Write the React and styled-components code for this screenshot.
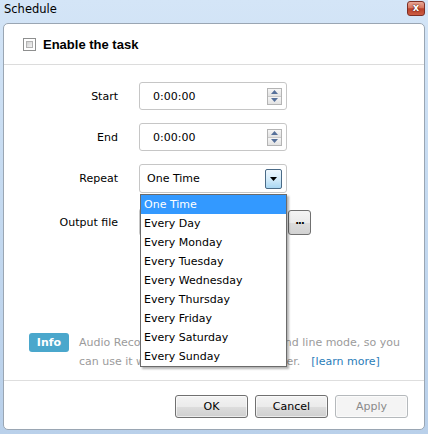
import React from 'react';
import styled, { createGlobalStyle } from 'styled-components';

const GlobalStyle = createGlobalStyle`
  html, body { margin: 0; padding: 0; }
  body {
    font-family: "DejaVu Sans", Verdana, sans-serif;
    font-size: 11px;
    color: #000;
  }
`;

const Window = styled.div`
  width: 428px;
  height: 434px;
  box-sizing: border-box;
  padding: 0 3px 4px 3px;
  background: linear-gradient(180deg, #d4e5f7 0%, #c6dbf1 40%, #b9d0ea 100%);
  display: flex;
  flex-direction: column;
`;

const TitleBar = styled.div`
  height: 23px;
  flex: none;
  display: flex;
  justify-content: space-between;
  align-items: flex-start;
`;

const Title = styled.div`
  padding: 2px 0 0 1px;
  line-height: 14px;
  font-size: 11.5px;
`;

const CloseButton = styled.div`
  margin: 1px 0 0 0;
  width: 18px;
  height: 15px;
  box-sizing: border-box;
  border: 1px solid #7d2f25;
  border-radius: 3px;
  background: linear-gradient(180deg, #e9a897 0%, #d6765f 45%, #b9412a 52%, #cc5d43 100%);
  color: #fff;
  font: bold 10px/12px "DejaVu Sans", sans-serif;
  text-align: center;
  text-shadow: 0 0 2px #5a1a10, 0 0 1px #5a1a10;
`;

const Panel = styled.div`
  flex: 1;
  background: #fff;
  border: 1px solid #9aa6b3;
  border-radius: 5px;
  display: flex;
  flex-direction: column;
  position: relative;
`;

const Header = styled.div`
  height: 41px;
  box-sizing: border-box;
  border-bottom: 1px solid #dcdcdc;
  display: flex;
  align-items: center;
  padding: 1px 0 0 19px;
`;

const CheckBox = styled.span`
  width: 13px;
  height: 13px;
  box-sizing: border-box;
  border: 1px solid #8e8f8f;
  background: #fff;
  padding: 2px;
  display: inline-flex;
  &::after {
    content: "";
    flex: 1;
    border: 1px solid #b3b3b3;
    background: linear-gradient(135deg, #d0d0d0 0%, #f4f4f4 100%);
  }
`;

const CheckLabel = styled.span`
  margin-left: 7px;
  font: bold 13px "Liberation Sans", Arial, sans-serif;
`;

const Form = styled.div`
  padding-top: 17px;
  display: flex;
  flex-direction: column;
  gap: 13px;
`;

const Row = styled.div`
  display: grid;
  grid-template-columns: 114px 148px;
  column-gap: 21px;
  align-items: center;
  margin-top: ${p => p.$extra || 0}px;
`;

const Label = styled.div`
  text-align: right;
`;

const Field = styled.div`
  height: ${p => p.$h || 28}px;
  box-sizing: border-box;
  border: 1px solid #c6c6c6;
  border-radius: 3px;
  background: #fff;
  display: flex;
  align-items: center;
  justify-content: space-between;
  padding: 0 4px 0 ${p => p.$pl || 13}px;
  position: relative;
`;

const Spinner = styled.div`
  width: 15px;
  height: 17px;
  box-sizing: border-box;
  border: 1px solid #b4b4b4;
  display: flex;
  flex-direction: column;
  gap: 1px;
  background: #c9c9c9;
`;

const SpinHalf = styled.div`
  flex: 1;
  background: linear-gradient(180deg, #f6f6f6 0%, #e2e2e2 100%);
  display: flex;
  align-items: center;
  justify-content: center;
`;

const ComboArrow = styled.div`
  width: 17px;
  height: 20px;
  box-sizing: border-box;
  border: 1px solid #4a6a86;
  border-radius: 2px;
  background: linear-gradient(180deg, #eef7fd 0%, #d5ecfa 50%, #a9d7f3 100%);
  display: flex;
  align-items: center;
  justify-content: center;
`;

const DropList = styled.div`
  position: absolute;
  top: calc(100% + 2px);
  left: 0;
  width: 147px;
  box-sizing: border-box;
  border: 1px solid #6b6b6b;
  background: #fff;
  box-shadow: 2px 2px 2px rgba(0, 0, 0, 0.3);
  z-index: 5;
`;

const DropItem = styled.div`
  height: 19px;
  line-height: 19px;
  padding-left: 3px;
  background: ${p => (p.$active ? '#3399ff' : 'transparent')};
  color: ${p => (p.$active ? '#fff' : '#000')};
  white-space: nowrap;
`;

const OutputField = styled.div`
  display: flex;
  align-items: center;
  gap: 2px;
  width: 172px;
`;

const OutputBox = styled.div`
  width: 147px;
  flex: none;
  height: 28px;
  box-sizing: border-box;
  border: 1px solid #c6c6c6;
  border-radius: 3px;
`;

const BrowseButton = styled.div`
  width: 23px;
  height: 25px;
  flex: none;
  box-sizing: border-box;
  border: 1px solid #707070;
  border-radius: 3px;
  background: linear-gradient(180deg, #f4f4f4 0%, #ebebeb 50%, #dddddd 51%, #d2d2d2 100%);
  font-weight: bold;
  font-size: 10px;
  display: flex;
  align-items: center;
  justify-content: center;
  padding-bottom: 3px;
  letter-spacing: -1px;
`;

const InfoSection = styled.div`
  margin-top: auto;
  display: flex;
  align-items: flex-start;
  padding: 0 0 9px 25px;
`;

const InfoBadge = styled.div`
  width: 40px;
  height: 19px;
  flex: none;
  border-radius: 3px;
  background: #4aa7cc;
  color: #fff;
  font-weight: bold;
  font-size: 11px;
  line-height: 19px;
  text-align: center;
`;

const InfoText = styled.div`
  margin-left: 10px;
  line-height: 19px;
  color: #9b9b9b;
  white-space: nowrap;
`;

const LearnMore = styled.span`
  color: #2a7db9;
  margin-left: 11px;
`;

const Footer = styled.div`
  height: 49px;
  flex: none;
  box-sizing: border-box;
  border-top: 1px solid #dedede;
  padding: 14px 16px 0 0;
  display: flex;
  justify-content: flex-end;
  align-items: flex-start;
  gap: 7px;
`;

const Button = styled.div`
  width: 73px;
  height: 23px;
  box-sizing: border-box;
  border: 1px solid ${p => (p.$disabled ? '#b5b9bc' : '#707070')};
  border-radius: 3px;
  background: ${p =>
    p.$disabled
      ? '#f4f4f4'
      : 'linear-gradient(180deg, #f3f3f3 0%, #ebebeb 50%, #dddddd 51%, #cfcfcf 100%)'};
  color: ${p => (p.$disabled ? '#8a8a8a' : '#000')};
  box-shadow: inset 0 0 0 1px rgba(255, 255, 255, 0.6);
  display: flex;
  align-items: center;
  justify-content: center;
  font-size: 11px;
`;

const UpArrow = () => (
  <svg width="7" height="4" viewBox="0 0 7 4">
    <path d="M0 4 L3.5 0 L7 4 Z" fill="#56709a" />
  </svg>
);

const DownArrow = ({ color = '#56709a', w = 7, h = 4 }) => (
  <svg width={w} height={h} viewBox="0 0 7 4">
    <path d="M0 0 L7 0 L3.5 4 Z" fill={color} />
  </svg>
);

const SpinBox = ({ value }) => (
  <Field>
    <span>{value}</span>
    <Spinner>
      <SpinHalf><UpArrow /></SpinHalf>
      <SpinHalf><DownArrow /></SpinHalf>
    </Spinner>
  </Field>
);

const options = [
  'One Time',
  'Every Day',
  'Every Monday',
  'Every Tuesday',
  'Every Wednesday',
  'Every Thursday',
  'Every Friday',
  'Every Saturday',
  'Every Sunday',
];

export default function App() {
  return (
    <>
      <GlobalStyle />
      <Window>
        <TitleBar>
          <Title>Schedule</Title>
          <CloseButton>x</CloseButton>
        </TitleBar>
        <Panel>
          <Header>
            <CheckBox />
            <CheckLabel>Enable the task</CheckLabel>
          </Header>
          <Form>
            <Row>
              <Label>Start</Label>
              <SpinBox value="0:00:00" />
            </Row>
            <Row>
              <Label>End</Label>
              <SpinBox value="0:00:00" />
            </Row>
            <Row>
              <Label>Repeat</Label>
              <Field $h={29} $pl={7}>
                <span>One Time</span>
                <ComboArrow>
                  <DownArrow color="#000" w={7} h={4} />
                </ComboArrow>
                <DropList>
                  {options.map((o, i) => (
                    <DropItem key={o} $active={i === 0}>{o}</DropItem>
                  ))}
                </DropList>
              </Field>
            </Row>
            <Row $extra={2}>
              <Label>Output file</Label>
              <OutputField>
                <OutputBox />
                <BrowseButton>...</BrowseButton>
              </OutputField>
            </Row>
          </Form>
          <InfoSection>
            <InfoBadge>Info</InfoBadge>
            <InfoText>
              Audio Recorder Plus supports command line mode, so you
              <br />
              can use it with Windows Task Scheduler.
              <LearnMore>[learn more]</LearnMore>
            </InfoText>
          </InfoSection>
          <Footer>
            <Button>OK</Button>
            <Button>Cancel</Button>
            <Button $disabled>Apply</Button>
          </Footer>
        </Panel>
      </Window>
    </>
  );
}
